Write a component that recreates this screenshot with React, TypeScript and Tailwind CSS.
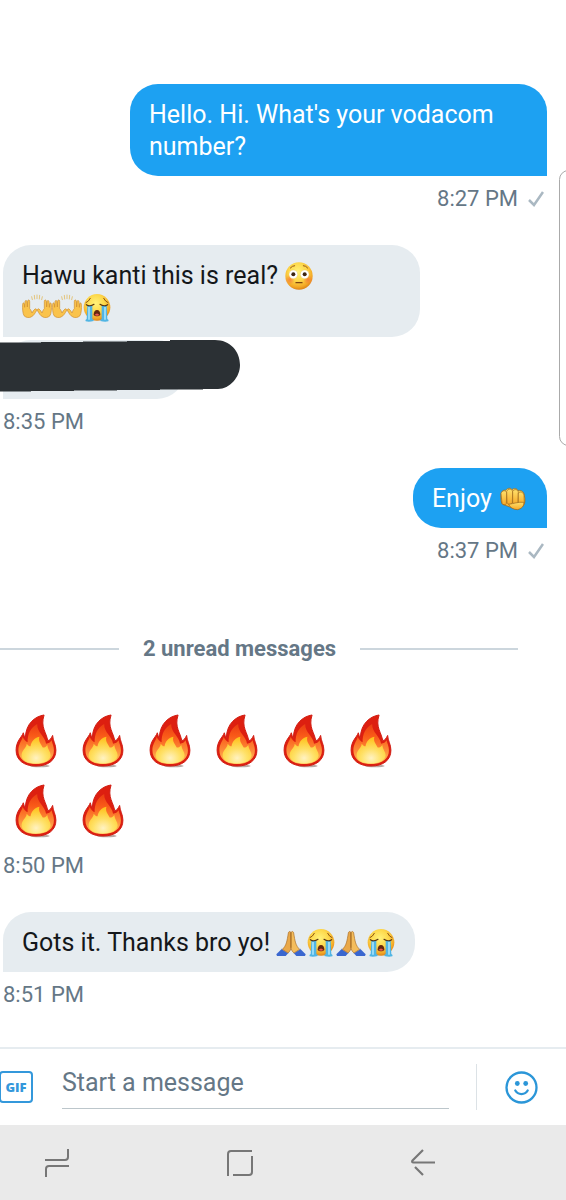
import { useId, type ReactNode } from "react";

const emojiClass = "inline-block h-[30px] w-[30px] align-[-7px]";

function FaceGradient({ id }: { id: string }) {
  return (
    <radialGradient id={id} cx="45%" cy="35%" r="65%">
      <stop offset="0" stopColor="#fff27a" />
      <stop offset="0.5" stopColor="#fdd84a" />
      <stop offset="0.85" stopColor="#f3a826" />
      <stop offset="1" stopColor="#dd8518" />
    </radialGradient>
  );
}

function Flushed() {
  const id = useId();
  return (
    <svg role="img" aria-label="flushed face" viewBox="0 0 90 90" className={emojiClass}>
      <defs>
        <FaceGradient id={id} />
        <radialGradient id={id + "b"}>
          <stop offset="0" stopColor="#f4703a" stopOpacity="0.75" />
          <stop offset="1" stopColor="#f4703a" stopOpacity="0" />
        </radialGradient>
      </defs>
      <circle cx="45" cy="45" r="41" fill={`url(#${id})`} />
      <circle cx="18" cy="56" r="15" fill={`url(#${id}b)`} />
      <circle cx="72" cy="56" r="15" fill={`url(#${id}b)`} />
      <path d="M19 21q6-7 13-7M58 14q8 0 13 7" fill="none" stroke="#9a5a12" strokeWidth="3" strokeLinecap="round" />
      <circle cx="28" cy="40" r="13" fill="#fff" stroke="#e2b85a" />
      <circle cx="62" cy="40" r="13" fill="#fff" stroke="#e2b85a" />
      <circle cx="28" cy="40" r="6" fill="#3d2412" />
      <circle cx="62" cy="40" r="6" fill="#3d2412" />
      <path d="M36 65h18" stroke="#7c4312" strokeWidth="4" strokeLinecap="round" />
    </svg>
  );
}

function Sobbing() {
  const id = useId();
  return (
    <svg role="img" aria-label="loudly crying face" viewBox="0 0 90 90" className={emojiClass}>
      <defs>
        <FaceGradient id={id} />
      </defs>
      <circle cx="45" cy="43" r="40" fill={`url(#${id})`} />
      <path d="M12 29q8-3 13-13M78 29q-8-3-13-13" fill="none" stroke="#8d5413" strokeWidth="3" strokeLinecap="round" />
      <path d="M16 38h15v40q5 2 4 6-14 4-24 1-3-4 3-7z" fill="#50b5e4" />
      <path d="M74 38H59v40q-5 2-4 6 14 4 24 1 3-4-3-7z" fill="#50b5e4" />
      <path d="M21 42v38M69 42v38" stroke="#a6e2f8" strokeWidth="5" />
      <path d="M13 35q11 7 23-1M77 35q-11 7-23-1" fill="none" stroke="#563412" strokeWidth="3.500" strokeLinecap="round" />
      <path d="M35 66c0-10 4-15 10-15s10 5 10 15c-4 5-16 5-20 0z" fill="#65270e" />
      <path d="M38 66q7-9 14 0-6 4-14 0z" fill="#ed5a4d" />
    </svg>
  );
}

function RaisedHands() {
  const hand = "M6 68C2 60 1 47 2 34c0-5 4-6 5-1l1 10 1-17c1-5 5-5 6 0l1 16 1-18c1-5 6-4 6 1l0 22c4 3 5 9 7 13 2-5 5-9 9-12 4-2 6 2 4 6-4 6-7 14-16 18-6 3-15 2-21-4z";
  return (
    <svg role="img" aria-label="raising hands" viewBox="0 0 90 90" className={emojiClass}>
      <path d="M29 11l2 9M37 7l1 11M45 6v11M53 7l-1 11M61 11l-2 9" stroke="#e2bd68" strokeWidth="2.500" strokeLinecap="round" />
      <g fill="#fac34b" stroke="#cf8c2c" strokeWidth="2" strokeLinejoin="round">
        <path d={hand} />
        <path d={hand} transform="translate(90 0) scale(-1 1)" />
      </g>
    </svg>
  );
}

function PrayingHands() {
  return (
    <svg role="img" aria-label="folded hands" viewBox="0 0 90 90" className={emojiClass}>
      <path d="M1 79L17 63l20 12-8 9H3z" fill="#3a67cf" />
      <path d="M89 79L73 63 53 75l8 9h26z" fill="#3a67cf" />
      <path d="M17 63l20 12M73 63L53 75" stroke="#7fa2ee" strokeWidth="3" />
      <path d="M19 64c12-11 14-24 18-49 1-6 7-6 8 0v42c0 8-4 14-9 18z" fill="#e9a849" stroke="#aa6c22" strokeWidth="2" />
      <path d="M71 64C59 53 57 40 53 15c-1-6-7-6-8 0v42c0 8 4 14 9 18z" fill="#f4bd5c" stroke="#aa6c22" strokeWidth="2" />
      <path d="M45 13v46" stroke="#98601f" strokeWidth="2" />
    </svg>
  );
}

function Fist() {
  const id = useId();
  return (
    <svg role="img" aria-label="oncoming fist" viewBox="0 0 90 90" className={emojiClass}>
      <defs>
        <linearGradient id={id} x2="0" y2="1">
          <stop offset="0" stopColor="#ffe06b" />
          <stop offset="1" stopColor="#f7a928" />
        </linearGradient>
      </defs>
      <g fill={`url(#${id})`} stroke="#9a6419" strokeWidth="2" strokeLinejoin="round">
        <path d="M9 46c-2-18 3-30 14-27 6-8 15-8 19-2 7-6 15-4 18 3 9-3 18 3 19 14 3 13 3 24-3 31-7 10-21 12-30 8L14 61c-3-4-5-9-5-15z" />
        <path d="M9 28c3-9 14-11 17-2l-1 33c-3 5-11 4-13-1z" />
        <path d="M26 22c4-9 16-9 18 1l-1 34c-4 6-13 5-16-1z" />
        <path d="M44 22c4-8 16-6 17 2l-1 33c-4 6-12 5-16 0z" />
        <path d="M61 27c7-6 15-3 17 8l1 22c-4 6-14 7-18 1z" />
        <path d="M32 61c14-2 30-8 45-6 2 11-6 19-18 22-12 0-23-6-27-16z" />
      </g>
    </svg>
  );
}

function Fire() {
  const id = useId();
  return (
    <svg role="img" aria-label="fire" viewBox="45 40 127 164" className="h-[54px] w-[42px]">
      <defs>
        <linearGradient id={id} x2="0" y2="1">
          <stop offset="0" stopColor="#ea3c12" />
          <stop offset="0.3" stopColor="#f95a18" />
          <stop offset="0.65" stopColor="#fd8a38" />
          <stop offset="1" stopColor="#ffc25a" />
        </linearGradient>
        <radialGradient id={id + "y"} cx="50%" cy="80%" r="75%">
          <stop offset="0" stopColor="#fffad0" />
          <stop offset="0.45" stopColor="#ffe96c" />
          <stop offset="1" stopColor="#ffcc1c" />
        </radialGradient>
      </defs>
      <ellipse cx="120" cy="198" rx="30" ry="4" fill="#b9a9a4" />
      <path
        d="M133 43C106 47 78 68 76 112c-3-3-4-9-6-15-5 14-22 25-22 53 0 31 25 48 60 48 38 0 61-18 61-48 0-18-9-28-10-45-4 8-8 15-15 16-3-24-23-41-11-78z"
        fill="#dd1f10"
        stroke="#d01c12"
        strokeWidth="3"
        strokeLinejoin="round"
      />
      <path
        d="M112 70C92 82 83 98 83 126c-6-2-11-8-15-16-3 12-13 22-13 40 0 28 23 42 53 42 34 0 55-16 55-42 0-12-5-20-7-30-4 6-9 10-17 10-3-24-27-32-27-60z"
        fill={`url(#${id})`}
      />
      <path d="M119 109c-16 4-25 14-27 29-4 0-8-3-12-8 1 12-17 20-15 38 3 15 20 22 43 22 25 0 43-8 45-24 0-12-9-18-10-32-4 5-7 8-14 8-4-10-15-18-10-33z" fill={`url(#${id}y)`} opacity="0.9" />
    </svg>
  );
}

function Check() {
  return (
    <svg viewBox="0 0 16 16" className="h-4 w-4" fill="none" stroke="#aab8c2" strokeWidth="2.500" aria-label="Sent" role="img">
      <path d="M1 9L6 14 15 1" />
    </svg>
  );
}

function Bubble({ sent = false, children }: { sent?: boolean; children: ReactNode }) {
  const look = sent
    ? "rounded-br-none bg-[#1da1f2] text-white"
    : "rounded-bl-none bg-[#e6ecf0] text-[#14171a]";
  return (
    <p className={`max-w-[417px] rounded-[28px] px-[19px] pt-[15px] pb-[13px] text-[25px] leading-8 ${look}`}>
      {children}
    </p>
  );
}

function Message({ sent = false, time, children }: { sent?: boolean; time: string; children: ReactNode }) {
  return (
    <article className={`flex flex-col gap-[3px] ${sent ? "items-end" : "items-start"}`}>
      {children}
      <div className="mt-2 flex items-center gap-[10px] pr-[3px] text-[22px] leading-6 text-[#657786]">
        <time>{time}</time>
        {sent && <Check />}
      </div>
    </article>
  );
}

export default function App() {
  return (
    <div className="relative flex min-h-screen flex-col overflow-hidden bg-white font-['Roboto',sans-serif]">
      <main className="flex flex-1 flex-col gap-[34px] pt-[84px] pr-[19px] pb-10 pl-[3px]">
        <Message sent time="8:27 PM">
          <Bubble sent>Hello. Hi. What's your vodacom number?</Bubble>
        </Message>

        <Message time="8:35 PM">
          <Bubble>
            Hawu kanti this is real? <Flushed />{" "}
            <span className="whitespace-nowrap"><RaisedHands /><RaisedHands /><Sobbing /></span>
          </Bubble>
          <div className="relative h-[59px] w-[182px] rounded-[28px] rounded-bl-none bg-[#e6ecf0]">
            <svg viewBox="0 0 240 53" className="absolute -top-px -left-[3px] h-[53px] w-[240px] max-w-none" aria-hidden="true">
              <path
                d="M0 3.500H41V3H83V2.500H127V2H170V1H215C230 1 240 12 240 26C240 38 230 50 218 50H203V50.500H160V51H117V51.500H74V52H31V52.500H0Z"
                fill="#2b3034"
              />
            </svg>
          </div>
        </Message>

        <Message sent time="8:37 PM">
          <Bubble sent>Enjoy <Fist /></Bubble>
        </Message>

        <div className="mt-10 mr-[29px] -ml-[42px] flex items-center gap-6">
          <span className="h-[2px] flex-1 bg-[#ccd6dd]" />
          <h2 className="text-[22px] leading-6 font-bold text-[#657786]">2 unread messages</h2>
          <span className="h-[2px] flex-1 bg-[#ccd6dd]" />
        </div>

        <Message time="8:50 PM">
          <div className="mt-[11px] -mb-[3px] -ml-px flex max-w-[417px] flex-wrap">
            {Array.from({ length: 8 }, (_, i) => (
              <span key={i} className="flex h-[70px] w-[67px] items-center justify-center">
                <Fire />
              </span>
            ))}
          </div>
        </Message>

        <Message time="8:51 PM">
          <Bubble>
            Gots it. Thanks bro yo! <span className="whitespace-nowrap"><PrayingHands /><Sobbing /><PrayingHands /><Sobbing /></span>
          </Bubble>
        </Message>
      </main>

      <div className="absolute top-[170px] -right-3 h-[276px] w-[19px] rounded-[10px] border border-[#aaa] bg-white" aria-hidden="true" />

      <form className="flex h-[78px] items-center border-t-2 border-[#e6ecf0] pr-7" onSubmit={(e) => e.preventDefault()}>
        <button type="button" aria-label="Add a GIF" className="-ml-px h-8 w-[34px] rounded-[4px] border-2 border-[#3498db] font-['Open_Sans',sans-serif] text-[13px] leading-none font-extrabold text-[#3498db]">
          GIF
        </button>
        <input
          type="text"
          aria-label="Message"
          placeholder="Start a message"
          className="mr-[27px] mb-4 ml-[29px] h-[52px] min-w-0 flex-1 self-end border-b border-[#bcc6cb] bg-transparent text-[25px] text-[#14171a] outline-none placeholder:text-[#657786] placeholder:opacity-100"
        />
        <span className="h-[46px] w-px bg-[#dce2e6]" />
        <button type="button" aria-label="Emoji" className="ml-7">
          <svg viewBox="0 0 33 33" className="h-[33px] w-[33px]" fill="none" stroke="#2b96d8" strokeWidth="2.300" strokeLinecap="round">
            <circle cx="16.500" cy="16.500" r="15" />
            <circle cx="12.300" cy="12.500" r="2.400" fill="#2b96d8" stroke="none" />
            <circle cx="20.700" cy="12.500" r="2.400" fill="#2b96d8" stroke="none" />
            <path d="M10.300 19.500C13 24.200 20 24.200 22.700 19.500" />
          </svg>
        </button>
      </form>

      <nav aria-label="System" className="flex h-[75px] items-center justify-between bg-[#eaeaea] pr-[131px] pl-[45px] text-[#777]">
        <button type="button" aria-label="Recent apps">
          <svg viewBox="0 0 24 28" className="h-7 w-6" fill="none" stroke="currentColor" strokeWidth="2">
            <path d="M0 11H20Q23 11 23 8V0M24 17H4Q1 17 1 20V28" />
          </svg>
        </button>
        <button type="button" aria-label="Home">
          <svg viewBox="0 0 26 26" className="h-[26px] w-[26px]" fill="none" stroke="currentColor" strokeWidth="2">
            <path d="M1 26V4Q1 1 4 1H25M25 6V22Q25 25 22 25H6" />
          </svg>
        </button>
        <button type="button" aria-label="Back">
          <svg viewBox="0 0 24 27" className="h-[27px] w-6" fill="none" stroke="currentColor" strokeWidth="2.200" strokeLinejoin="round">
            <path d="M12 1L1.500 11.500Q.5 13.500 2.500 13.500H24M4 18L12 26" />
          </svg>
        </button>
      </nav>
    </div>
  );
}
